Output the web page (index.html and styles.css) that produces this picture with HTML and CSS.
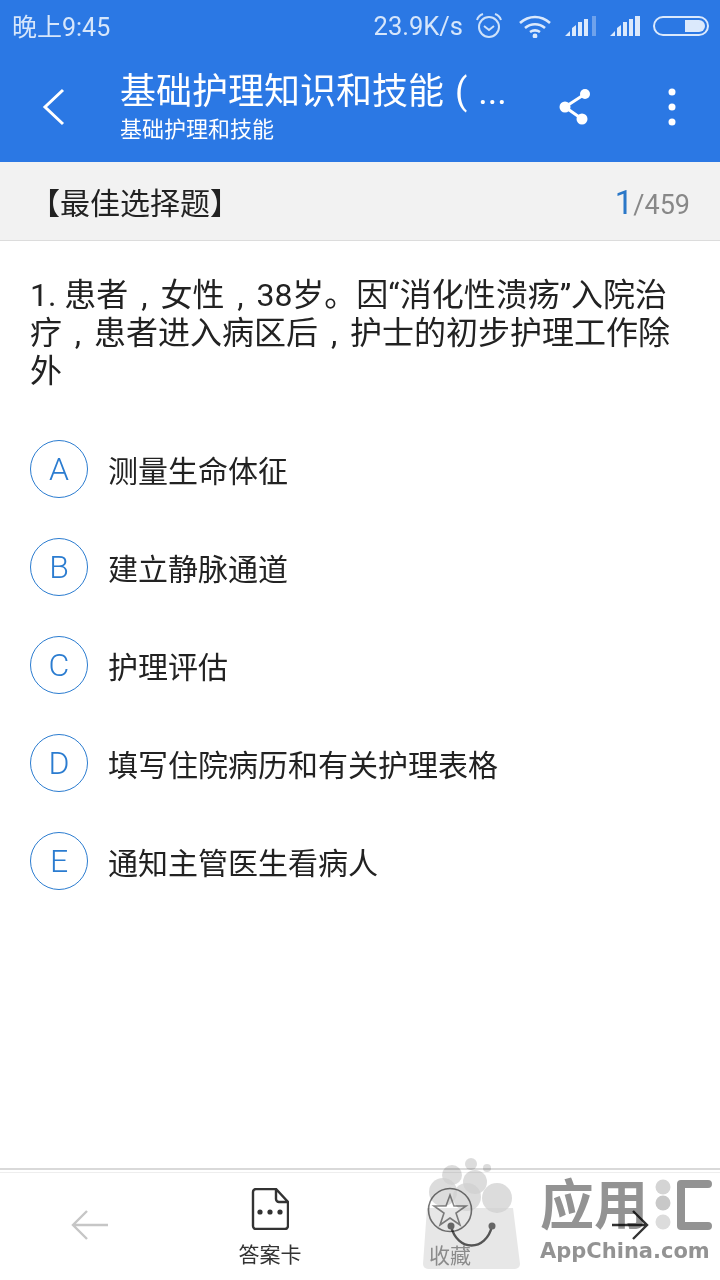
FILE: index.html
```html
<!DOCTYPE html>
<html lang="zh-CN">
<head>
    <meta charset="UTF-8">
    <meta name="viewport" content="width=device-width, initial-scale=1.0">
    <title>基础护理知识和技能</title>
    <link rel="stylesheet" href="styles.css">
</head>
<body>

<div class="page">
    <header class="top">
        <div class="status">
            <span class="status-time">晚上9:45</span>
            <span class="status-speed">23.9K/s</span>
            <svg class="ic-alarm" viewBox="0 0 28 26" width="28" height="26">
                <circle cx="14" cy="14" r="10" fill="none" stroke="#cfe2fa" stroke-width="2"/>
                <path d="M9 13l5 4 5-4" fill="none" stroke="#cfe2fa" stroke-width="2"/>
                <path d="M2 7c1-3 3-5 6-6M26 7c-1-3-3-5-6-6" fill="none" stroke="#cfe2fa" stroke-width="2"/>
            </svg>
            <svg class="ic-wifi" viewBox="0 0 34 24" width="34" height="24">
                <path d="M2 9c9-8 21-8 30 0M7 14c6-5 14-5 20 0M12 18c3-2 7-2 10 0" fill="none" stroke="#dbe9fc" stroke-width="2.6"/>
                <circle cx="17" cy="22" r="2.4" fill="#dbe9fc"/>
            </svg>
            <svg class="ic-signal" viewBox="0 0 32 20" width="32" height="20">
                <path d="M0 20l5-5v5zM7 20v-8l4-3v11zM13 20V6h4v14zM19 20V3h4v17z" fill="#dbe9fc"/>
                <rect x="27" y="0" width="4" height="20" fill="#6ea2ec"/>
            </svg>
            <svg class="ic-signal" viewBox="0 0 32 20" width="32" height="20">
                <path d="M0 20l5-5v5zM7 20v-8l4-3v11zM13 20V6h4v14zM19 20V3h4v17zM25 20V0h5v20z" fill="#dbe9fc"/>
            </svg>
            <svg class="ic-battery" viewBox="0 0 56 20" width="56" height="20">
                <rect x="1" y="1" width="54" height="18" rx="9" fill="none" stroke="#dbe9fc" stroke-width="2"/>
                <path d="M32 4h14a6 6 0 0 1 0 12H32z" fill="#dbe9fc"/>
            </svg>
        </div>
        <div class="appbar">
            <svg class="ic-back" viewBox="0 0 24 38" width="24" height="38">
                <path d="M21 2L3 19l18 17" fill="none" stroke="#fff" stroke-width="3"/>
            </svg>
            <div class="appbar-titles">
                <div class="appbar-title">基础护理知识和技能 (&nbsp;...</div>
                <div class="appbar-sub">基础护理和技能</div>
            </div>
            <svg class="ic-share" viewBox="0 0 34 38" width="34" height="38">
                <path d="M26 6L6 19l17 12" fill="none" stroke="#fff" stroke-width="3"/>
                <circle cx="26" cy="6" r="5" fill="#fff"/>
                <circle cx="6" cy="19" r="5.5" fill="#fff"/>
                <circle cx="23" cy="31" r="5.5" fill="#fff"/>
            </svg>
            <svg class="ic-more" viewBox="0 0 8 38" width="8" height="38">
                <circle cx="4" cy="4" r="3.5" fill="#fff"/>
                <circle cx="4" cy="19" r="3.5" fill="#fff"/>
                <circle cx="4" cy="34" r="3.5" fill="#fff"/>
            </svg>
        </div>
    </header>

    <div class="section-bar">
        <span class="section-name">【最佳选择题】</span>
        <span class="counter"><span class="counter-now">1</span>/459</span>
    </div>

    <main class="question">
        <p class="question-text">1. 患者<span class="cm">,</span>女性<span class="cm">,</span>38岁。因“消化性溃疡”入院治疗<span class="cm">,</span>患者进入病区后<span class="cm">,</span>护士的初步护理工作除外</p>
        <ul class="options">
            <li class="option"><span class="option-key">A</span>测量生命体征</li>
            <li class="option"><span class="option-key">B</span>建立静脉通道</li>
            <li class="option"><span class="option-key">C</span>护理评估</li>
            <li class="option"><span class="option-key">D</span>填写住院病历和有关护理表格</li>
            <li class="option"><span class="option-key">E</span>通知主管医生看病人</li>
        </ul>
    </main>

    <footer class="bottom">
        <div class="bottom-item">
            <svg viewBox="0 0 38 30" width="38" height="30">
                <path d="M16 1L2 15l14 14M2 15h35" fill="none" stroke="#c6c6c6" stroke-width="2.4"/>
            </svg>
        </div>
        <div class="bottom-item bottom-item-card">
            <svg viewBox="0 0 38 42" width="38" height="42">
                <path d="M5 1h20l12 13v24a3 3 0 0 1-3 3H5a3 3 0 0 1-3-3V4a3 3 0 0 1 3-3zM25 1v10a3 3 0 0 0 3 3h9" fill="none" stroke="#333" stroke-width="2.4"/>
                <circle cx="9" cy="24" r="2.6" fill="#333"/>
                <circle cx="19" cy="24" r="2.6" fill="#333"/>
                <circle cx="29" cy="24" r="2.6" fill="#333"/>
            </svg>
            <span class="bottom-label">答案卡</span>
        </div>
        <div class="bottom-item bottom-item-fav">
            <svg viewBox="0 0 46 46" width="46" height="46">
                <circle cx="23" cy="23" r="21.5" fill="none" stroke="#777" stroke-width="1.6"/>
                <path d="M23 8l4 11h12l-10 7 4 12-10-7-10 7 4-12-10-7h12z" fill="none" stroke="#888" stroke-width="1.6"/>
            </svg>
            <span class="bottom-label">收藏</span>
        </div>
        <div class="bottom-item">
            <svg viewBox="0 0 38 30" width="38" height="30">
                <path d="M22 1l14 14-14 14M1 15h35" fill="none" stroke="#333" stroke-width="2.4"/>
            </svg>
        </div>
    </footer>

    <!-- appchina stamp sits on top of the tab bar -->
    <svg class="watermark" viewBox="0 0 310 125" width="310" height="125">
        <g fill="#d0d0d0" fill-opacity="0.75">
            <circle cx="61" cy="9" r="6"/>
            <circle cx="77" cy="13" r="4"/>
            <circle cx="42" cy="20" r="10"/>
            <circle cx="33" cy="37" r="14"/>
            <circle cx="65" cy="27" r="12"/>
            <circle cx="57" cy="42" r="14"/>
            <circle cx="87" cy="43" r="15"/>
            <path d="M17 53h86l7 56a5 5 0 0 1-5 5H18a5 5 0 0 1-5-5z" fill-opacity="0.5"/>
        </g>
        <path d="M41 71c6 26 35 26 41 0" fill="none" stroke="#555" stroke-width="2.4"/>
        <circle cx="41" cy="71" r="3.5" fill="#666"/>
        <circle cx="82" cy="71" r="3.5" fill="#666"/>
        <text class="wm-cn" x="130" y="70">应用</text>
        <circle cx="253" cy="32" r="7.5" fill="#d4d4d4"/>
        <circle cx="253" cy="48" r="7.5" fill="#c8c8c8"/>
        <circle cx="253" cy="67" r="7.5" fill="#dcdcdc"/>
        <path d="M298 29H271V71H298" fill="none" stroke="#939393" stroke-width="8" stroke-linecap="round" stroke-linejoin="round"/>
        <text class="wm-en" x="130" y="103">AppChina.com</text>
    </svg>
</div>

</body>
</html>
```

FILE: styles.css
```css
html, body {
    margin: 0;
    padding: 0;
}
body {
    font-family: Roboto, "Noto Sans CJK SC", sans-serif;
    background-color: #fff;
    color: #222;
}
.page {
    position: relative;
    width: 720px;
    height: 1280px;
    display: flex;
    flex-direction: column;
    overflow: hidden;
}
.top {
    background-color: #2b78e4;
    color: #fff;
    height: 162px;
}
.status {
    display: flex;
    align-items: center;
    height: 52px;
    padding: 0 11px 0 12px;
    color: #d6e6fb;
}
.status-time {
    font-size: 25px;
    margin-top: -2px;
}
.status-speed {
    font-size: 25.5px;
    margin-left: auto;
}
.ic-alarm {
    margin-left: 12px;
}
.ic-wifi {
    margin-left: 15px;
}
.ic-signal {
    margin-left: 13px;
}
.ic-battery {
    margin-left: 11px;
}
.appbar {
    display: flex;
    align-items: center;
    height: 110px;
}
.ic-back {
    margin-left: 42px;
    flex: none;
}
.appbar-titles {
    margin-left: 54px;
    width: 390px;
    margin-top: 1px;
}
.appbar-title {
    font-size: 36px;
    line-height: 45px;
    word-spacing: 2px;
    white-space: nowrap;
}
.appbar-sub {
    font-size: 22px;
    line-height: 30px;
}
.ic-share {
    margin-left: 49px;
    flex: none;
}
.ic-more {
    margin-left: 75px;
    flex: none;
}
.section-bar {
    display: flex;
    align-items: center;
    justify-content: space-between;
    height: 78px;
    padding: 0 30px;
    background-color: #f2f2f2;
    border-bottom: 1px solid #dcdcdc;
}
.section-name {
    font-size: 30px;
}
.counter {
    font-size: 27px;
    color: #888;
    padding-top: 2px;
}
.counter-now {
    font-size: 33px;
    color: #2b78c8;
}
.question {
    flex: 1;
    padding: 35px 30px 0;
}
.question-text {
    margin: 0;
    font-size: 32px;
    line-height: 38px;
    color: #222;
}
.cm {
    display: inline-block;
    width: 1em;
    text-align: center;
}
.options {
    list-style: none;
    margin: 50px 0 0;
    padding: 0;
}
.option {
    display: flex;
    align-items: center;
    height: 58px;
    margin-bottom: 40px;
    font-size: 30px;
    color: #222;
}
.option-key {
    box-sizing: border-box;
    display: flex;
    align-items: center;
    justify-content: center;
    width: 58px;
    height: 58px;
    margin-right: 20px;
    border: 1px solid #2b7cd0;
    border-radius: 50%;
    font-size: 32px;
    font-weight: 300;
    color: #2b7cd0;
}
.bottom {
    display: grid;
    grid-template-columns: repeat(4, 1fr);
    height: 110px;
    border-top: 2px solid #d9d9d9;
    box-shadow: inset 0 2px 0 #fff, inset 0 3px 0 #eee;
    align-items: center;
}
.bottom-item {
    display: flex;
    flex-direction: column;
    align-items: center;
}
.bottom-item-card {
    margin-top: 8px;
}
.bottom-item-fav {
    margin-top: 8px;
}
.bottom-label {
    margin-top: 10px;
    font-size: 21px;
    line-height: 30px;
    color: #333;
}
.bottom-item-fav .bottom-label {
    margin-top: 8px;
    color: #9a9a9a;
}
.watermark {
    position: absolute;
    right: 0;
    bottom: 0;
    width: 310px;
    height: 125px;
    mix-blend-mode: multiply;
}
.wm-cn {
    font-family: "Noto Sans CJK SC", sans-serif;
    font-size: 54px;
    font-weight: 700;
    fill: #939393;
}
.wm-en {
    font-family: "DejaVu Sans", sans-serif;
    font-size: 21px;
    font-weight: 700;
    fill: #939393;
}
```
